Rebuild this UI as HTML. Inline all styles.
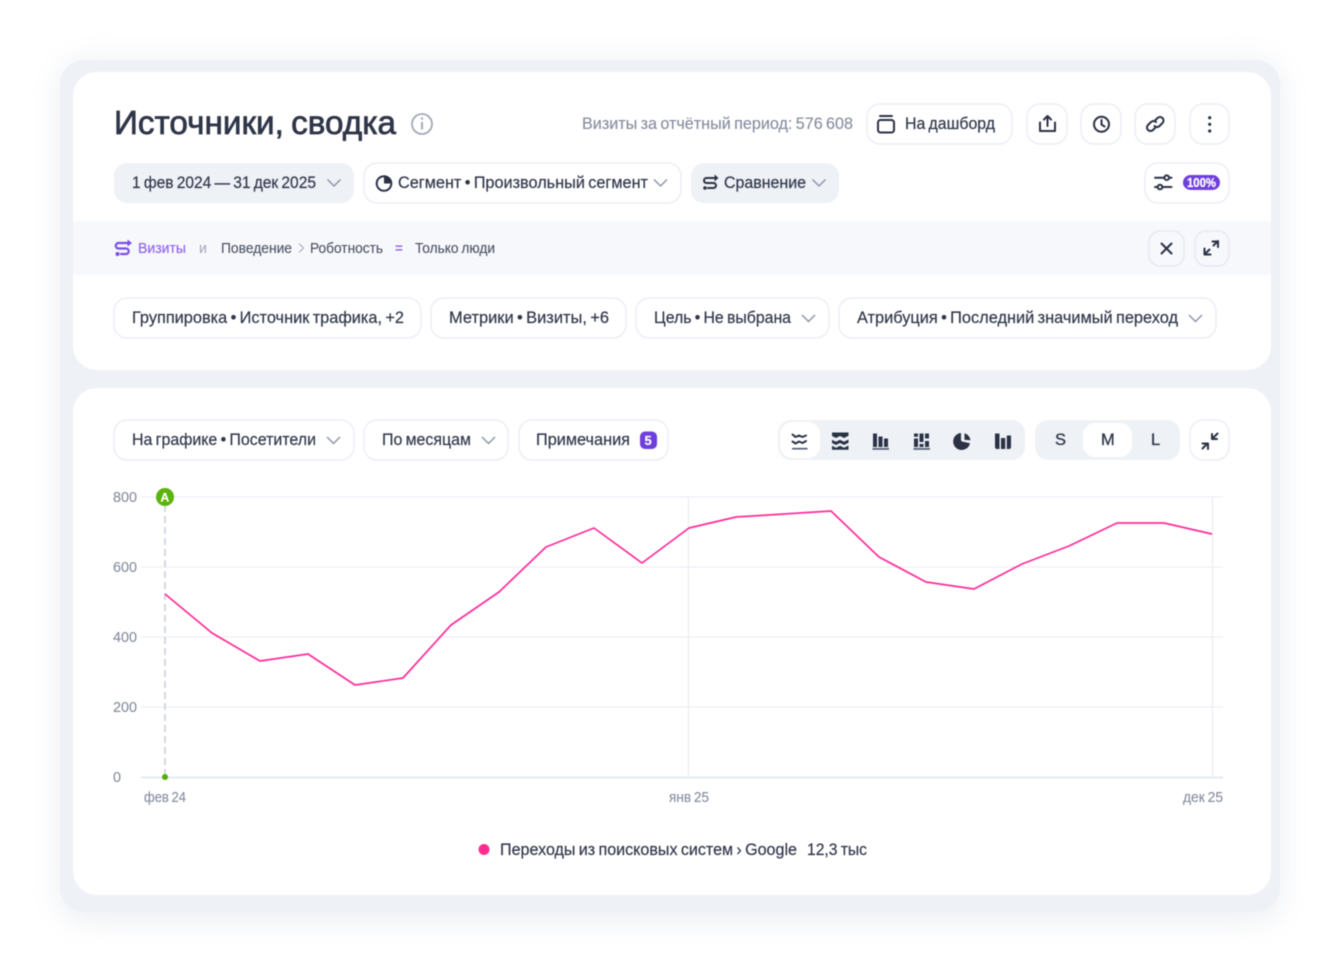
<!DOCTYPE html>
<html lang="ru"><head><meta charset="utf-8"><title>Источники, сводка</title>
<style>
html,body{margin:0;padding:0;background:#fff;width:1340px;height:972px;overflow:hidden}
svg{display:block;filter:blur(.45px)}
text{font-family:"Liberation Sans","Noto Sans CJK SC",sans-serif;font-size:16.5px;word-spacing:-1.2px;fill:#2f3649;stroke:#2f3649;stroke-width:.18}
.g{fill:#858b9e;stroke:#858b9e;stroke-width:.1}
.s{font-size:14.5px;word-spacing:-1px;stroke-width:.1}
.b{fill:#fff;stroke:#ebeef5;stroke-width:1.5}
.f{fill:#eef1f6}
.chev{fill:none;stroke:#8f96a8;stroke-width:1.5}
.i{fill:none;stroke:#2b3245;stroke-width:2;stroke-linecap:round;stroke-linejoin:round}
.d{fill:#2b3245}
.grid{stroke:#e8ebf2;stroke-width:1.1}
</style></head>
<body>
<svg width="1340" height="972" viewBox="0 0 1340 972" xmlns="http://www.w3.org/2000/svg">
<defs>
<filter id="sh" x="-10%" y="-10%" width="120%" height="120%"><feGaussianBlur stdDeviation="14"/></filter>
<path id="c" class="chev" d="M0 0l6.500 6.500L13 0"/>
</defs>
<rect x="58" y="60" width="1224" height="862" rx="28" fill="#e2e6ee" opacity=".6" filter="url(#sh)"/>
<rect x="60" y="60" width="1220" height="852" rx="24" fill="#eef1f6"/>
<rect x="73" y="72" width="1198" height="298" rx="24" fill="#fff"/>
<rect x="73" y="388" width="1198" height="507" rx="24" fill="#fff"/>

<!-- header -->
<text x="114" y="134" style="font-size:33px;stroke:#2b3245;stroke-width:.7;word-spacing:-2px" textLength="282" lengthAdjust="spacingAndGlyphs">Источники, сводка</text>
<circle cx="422" cy="124" r="10" fill="none" stroke="#a3a9ba" stroke-width="1.800"/>
<rect x="421" y="122" width="2" height="7.500" fill="#a3a9ba"/><circle cx="422" cy="118.600" r="1.200" fill="#a3a9ba"/>
<text class="g" x="582" y="129" textLength="271" lengthAdjust="spacingAndGlyphs">Визиты за отчётный период: 576 608</text>

<rect class="b" x="867" y="104" width="145" height="40" rx="13"/>
<rect class="i" x="878" y="120" width="16" height="12.500" rx="2.500"/><path class="i" d="M880 116h12"/>
<text x="905" y="129" textLength="90" lengthAdjust="spacingAndGlyphs">На дашборд</text>

<rect class="b" x="1027" y="104" width="40" height="40" rx="13"/>
<path class="i" d="M1047.500 126v-9.500M1044 119.500l3.500-3.500 3.500 3.500M1040 122.500v8.500h15v-8.500"/>
<rect class="b" x="1081" y="104" width="40" height="40" rx="13"/>
<circle class="i" cx="1101.500" cy="124.300" r="7.500"/><path class="i" d="M1101.500 120V124.500l3 2"/>
<rect class="b" x="1135" y="104" width="40" height="40" rx="13"/>
<path class="i" d="M1155 120.500l2.500-2.500a3.500 3.500 0 0 1 5 5l-3 3a3.500 3.500 0 0 1-5 0M1155.500 127.500l-2.500 2.500a3.500 3.500 0 0 1-5-5l3-3a3.500 3.500 0 0 1 5 0"/>
<rect class="b" x="1190" y="104" width="39" height="40" rx="13"/>
<circle class="d" cx="1209.700" cy="117.700" r="1.600"/><circle class="d" cx="1209.700" cy="124.300" r="1.600"/><circle class="d" cx="1209.700" cy="131" r="1.600"/>

<!-- row 2 -->
<rect class="f" x="114" y="163" width="240" height="40" rx="13"/>
<text x="132" y="188" textLength="184" lengthAdjust="spacingAndGlyphs">1 фев 2024 — 31 дек 2025</text>
<use href="#c" x="327.500" y="179.500"/>
<rect class="b" x="364" y="163" width="317" height="40" rx="13"/>
<circle class="i" cx="384" cy="183.500" r="7.300"/><path class="d" d="M384 183.500v-7.300a7.300 7.300 0 0 1 7.300 7.300z"/>
<text x="398" y="188" textLength="250" lengthAdjust="spacingAndGlyphs">Сегмент • Произвольный сегмент</text>
<use href="#c" x="654" y="179.500"/>
<rect class="f" x="691" y="163" width="148" height="40" rx="13"/>
<path class="i" d="M715 178h-8.500a2.500 2.500 0 0 0 0 5h7a2.500 2.500 0 0 1 0 5H708"/><path class="d" d="M714.500 174.500l4 3.500-4 3.500z"/><circle class="d" cx="705" cy="188" r="1.800"/>
<text x="724" y="188" textLength="82" lengthAdjust="spacingAndGlyphs">Сравнение</text>
<use href="#c" x="812.500" y="179.500"/>
<rect class="b" x="1145" y="163" width="84" height="40" rx="13"/>
<path class="i" d="M1155 177.700h9M1170 177.700h1.500M1155 187h2M1163 187h8.500" stroke-width="1.900"/>
<circle class="i" cx="1166.700" cy="177.700" r="2.300" stroke-width="1.700"/><circle class="i" cx="1160" cy="187" r="2.300" stroke-width="1.700"/>
<rect x="1183" y="175" width="37" height="15" rx="7.500" fill="#6f3fdc"/>
<text x="1187" y="187" style="font-size:12.500px;fill:#fff;stroke:#fff;stroke-width:.3;font-weight:700" textLength="29" lengthAdjust="spacingAndGlyphs">100%</text>

<!-- filter band -->
<rect x="73" y="221" width="1198" height="54" fill="#f7f8fc"/>
<path d="M128 243h-9.500a2.500 2.500 0 0 0 0 5.500h7.500a2.500 2.500 0 0 1 0 5.500H121" fill="none" stroke="#7b4fe8" stroke-width="2.200" stroke-linecap="round"/><path d="M127.500 239.500l4.500 3.500-4.500 3.500z" fill="#7b4fe8"/><circle cx="117.500" cy="254" r="2" fill="#7b4fe8"/>
<text class="s" x="138" y="253" style="fill:#8a5cf0;stroke:#8a5cf0" textLength="48" lengthAdjust="spacingAndGlyphs">Визиты</text>
<text class="s" x="199" y="253" style="fill:#a8adbc;stroke:#a8adbc" textLength="8" lengthAdjust="spacingAndGlyphs">и</text>
<text class="s" x="221" y="253" style="fill:#4a5063;stroke:#4a5063" textLength="71" lengthAdjust="spacingAndGlyphs">Поведение</text>
<path d="M299 243.500l4.500 4.500-4.500 4.500" fill="none" stroke="#a8adbc" stroke-width="1.100"/>
<text class="s" x="310" y="253" style="fill:#4a5063;stroke:#4a5063" textLength="73" lengthAdjust="spacingAndGlyphs">Роботность</text>
<text class="s" x="395" y="253" style="fill:#7b4fe8;stroke:#7b4fe8" textLength="8" lengthAdjust="spacingAndGlyphs">=</text>
<text class="s" x="415" y="253" style="fill:#4a5063;stroke:#4a5063" textLength="80" lengthAdjust="spacingAndGlyphs">Только люди</text>
<rect x="1149" y="231" width="35" height="35" rx="11" fill="#f7f8fc" stroke="#e7e9f1" stroke-width="1.500"/>
<path class="i" d="M1161.500 243.500l10 10M1171.500 243.500l-10 10" stroke-width="2.300"/>
<rect x="1195" y="231" width="34" height="35" rx="11" fill="#f7f8fc" stroke="#e7e9f1" stroke-width="1.500"/>
<path class="i" d="M1205 254l4.500-4.500M1213.500 245.500l4.500-4.500M1212.500 241.500h5.500v5.500M1204.500 248.500v6h6"/>

<!-- row 3 -->
<rect class="b" x="114" y="298" width="307" height="40" rx="13"/>
<text x="132" y="323" textLength="272" lengthAdjust="spacingAndGlyphs">Группировка • Источник трафика, +2</text>
<rect class="b" x="431" y="298" width="195" height="40" rx="13"/>
<text x="449" y="323" textLength="160" lengthAdjust="spacingAndGlyphs">Метрики • Визиты, +6</text>
<rect class="b" x="636" y="298" width="193" height="40" rx="13"/>
<text x="654" y="323" textLength="137" lengthAdjust="spacingAndGlyphs">Цель • Не выбрана</text>
<use href="#c" x="802" y="315"/>
<rect class="b" x="839" y="298" width="377" height="40" rx="13"/>
<text x="857" y="323" textLength="321" lengthAdjust="spacingAndGlyphs">Атрибуция • Последний значимый переход</text>
<use href="#c" x="1189" y="315"/>

<!-- chart toolbar -->
<rect class="b" x="114" y="420" width="240" height="40" rx="13"/>
<text x="132" y="445" textLength="184" lengthAdjust="spacingAndGlyphs">На графике • Посетители</text>
<use href="#c" x="327" y="437"/>
<rect class="b" x="364" y="420" width="144" height="40" rx="13"/>
<text x="382" y="445" textLength="89" lengthAdjust="spacingAndGlyphs">По месяцам</text>
<use href="#c" x="482" y="437"/>
<rect class="b" x="519" y="420" width="149" height="40" rx="13"/>
<text x="536" y="445" textLength="94" lengthAdjust="spacingAndGlyphs">Примечания</text>
<rect x="640" y="431.500" width="17" height="17.500" rx="5" fill="#6f3fdc"/>
<text x="644.500" y="445" style="font-size:13px;fill:#fff;stroke:#fff;font-weight:700">5</text>

<rect x="778" y="420" width="247" height="40" rx="13" fill="#eef1f6"/>
<rect x="780" y="422" width="40" height="36" rx="12" fill="#fff"/>
<path class="i" d="M792.500 434.500l3 2.500 3.500-1.500 3.500 1.500 3.500-1.500M792.500 441.500l3 2 3.500-2 3.500 1.500 3.500-2" stroke-width="1.300"/><path d="M792 448.700h15.500" stroke="#5a6175" stroke-width="1.700"/>
<path class="d" d="M832 432.500h16.500v3.200l-4.500 2.300-4-2-4 2-4-2zM832 439.800l4 2 4-2 4 2 4.500-2.300v3.200l-4.500 2.300-4-2-4 2-4-2zM832 445.800l4 2 4-2 4 2 4.500-2.300v4.200H832z"/>
<path class="d" d="M873 433.500h4v13.500h-4zM878.500 436.500h4v10.500h-4zM884 438.500h4v8.500h-4z"/><rect x="872.500" y="448" width="16.500" height="1.800" fill="#5a6175"/>
<path class="d" d="M914 438.500h4v8.500h-4zM914 433.500h4v3.300h-4zM919.500 433.500h4v8.500h-4zM919.500 444h4v3h-4zM925 433.500h4v5h-4zM925 441h4v6h-4z"/><rect x="913.500" y="448" width="16.500" height="1.800" fill="#5a6175"/>
<path class="d" d="M961 433a8.500 8.500 0 1 0 9 10.200l-6.800-1.400a2 2 0 0 1-2.200-2zM964.500 433.200a8.500 8.500 0 0 1 6 7.100l-6-.6z"/>
<path class="d" d="M995 433.500h4.500V449H997a2 2 0 0 1-2-2zM1001 438h4.200v11H1001zM1006.800 435.500h4.200v11.500a2 2 0 0 1-2 2h-2.200z"/>

<rect x="1035" y="420" width="145" height="40" rx="13" fill="#eef1f6"/>
<rect x="1083" y="423" width="49" height="34" rx="12" fill="#fff"/>
<text x="1055" y="445" style="stroke-width:.3">S</text>
<text x="1101" y="445" style="stroke-width:.3">M</text>
<text x="1151" y="445" style="stroke-width:.3">L</text>
<rect class="b" x="1190" y="420" width="39" height="40" rx="13"/>
<path class="i" d="M1217.500 433.500l-5 5M1212 434v5h5M1202.500 448.500l5-5M1202.500 443.500h5.500v5.500" stroke-width="1.900"/>

<!-- chart -->
<path class="grid" d="M141 497H1223M141 567H1223M141 637H1223M141 707H1223"/>
<path d="M141 777.500H1223" stroke="#dfe3ec" stroke-width="1.400"/>
<path class="grid" d="M688.500 497V777M1212.500 497V777"/>
<path d="M165 505V777" stroke="#c4c9d6" stroke-width="1.400" stroke-dasharray="7 4"/>
<text class="g s" x="113" y="502" textLength="24" lengthAdjust="spacingAndGlyphs">800</text>
<text class="g s" x="113" y="572" textLength="24" lengthAdjust="spacingAndGlyphs">600</text>
<text class="g s" x="113" y="642" textLength="24" lengthAdjust="spacingAndGlyphs">400</text>
<text class="g s" x="113" y="712" textLength="24" lengthAdjust="spacingAndGlyphs">200</text>
<text class="g s" x="113" y="782" textLength="8" lengthAdjust="spacingAndGlyphs">0</text>
<text class="g s" x="144" y="802" textLength="42" lengthAdjust="spacingAndGlyphs">фев 24</text>
<text class="g s" x="669" y="802" textLength="40" lengthAdjust="spacingAndGlyphs">янв 25</text>
<text class="g s" x="1183" y="802" textLength="40" lengthAdjust="spacingAndGlyphs">дек 25</text>
<polyline fill="none" stroke="#ff2d9b" stroke-width="1.700" stroke-linejoin="round" points="165,594 212,633 260,661 308,654 355,685 403,678 451,625 499,592 546,547 594,528 642,563 689,528 736,517 784,514 831,511 879,557 926,582 974,589 1022,564 1069,546 1117,523 1164,523 1212,534"/>
<circle cx="165" cy="497" r="9" fill="#5cb30c"/>
<text x="160.500" y="501.500" style="font-size:12px;fill:#fff;stroke:#fff;font-weight:700">A</text>
<circle cx="165" cy="777" r="3" fill="#4fb000"/>

<!-- legend -->
<circle cx="484" cy="849.500" r="5.500" fill="#ff2d8f"/>
<text x="500" y="855" textLength="297" lengthAdjust="spacingAndGlyphs">Переходы из поисковых систем › Google</text>
<text x="807" y="855" textLength="60" lengthAdjust="spacingAndGlyphs">12,3 тыс</text>
</svg>
</body></html>
